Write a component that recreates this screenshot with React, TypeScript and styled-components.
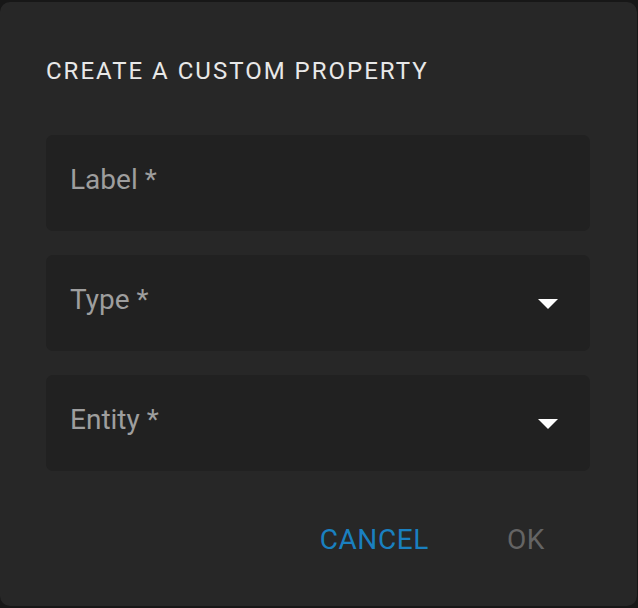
import * as React from 'react';
import styled, { createGlobalStyle } from 'styled-components';

const GlobalStyle = createGlobalStyle`
  html, body {
    margin: 0;
    padding: 0;
    background: #171717;
    font-family: Roboto, "Liberation Sans", Arial, sans-serif;
  }
`;

const Backdrop = styled.div`
  width: 638px;
  height: 608px;
  padding-top: 2px;
  box-sizing: border-box;
  overflow: hidden;
`;

const Dialog = styled.div`
  width: 637px;
  height: 604px;
  box-sizing: border-box;
  background: #272727;
  border-radius: 10px;
  padding: 53px 47px 0 46px;
  display: flex;
  flex-direction: column;
`;

const Title = styled.h2`
  margin: 0 0 48px;
  font-size: 24px;
  line-height: 32px;
  font-weight: 400;
  letter-spacing: 2px;
  color: #e8e8e8;
  text-transform: uppercase;
`;

const Fields = styled.div`
  display: flex;
  flex-direction: column;
  gap: 24px;
`;

const Field = styled.div<{ $select?: boolean }>`
  height: 96px;
  box-sizing: border-box;
  background: #212121;
  border-radius: 7px;
  padding: ${(p) => (p.$select ? '0 32px 0 24px' : '28px 32px 0 24px')};
  display: flex;
  align-items: ${(p) => (p.$select ? 'center' : 'flex-start')};
  justify-content: space-between;
`;

const FieldLabel = styled.span<{ $offset?: number }>`
  font-size: 28px;
  line-height: 34px;
  color: #9e9e9e;
  margin-top: ${(p) => p.$offset ?? 0}px;
`;

const Caret = styled.span`
  width: 0;
  height: 0;
  border-left: 10px solid transparent;
  border-right: 10px solid transparent;
  border-top: 10px solid #ffffff;
  margin-top: 2px;
`;

const Actions = styled.div`
  display: flex;
  justify-content: flex-end;
  gap: 38px;
  margin-top: 44px;
  padding-right: 25px;
`;

const Button = styled.button<{ $primary?: boolean }>`
  background: none;
  border: none;
  padding: 8px 20px;
  font-family: inherit;
  font-size: 28px;
  line-height: 34px;
  font-weight: 400;
  letter-spacing: 0.6px;
  text-transform: uppercase;
  color: ${(p) => (p.$primary ? '#1a80c0' : '#646464')};
  cursor: pointer;
`;

export default function App() {
  return (
    <>
      <GlobalStyle />
      <Backdrop>
        <Dialog>
          <Title>Create a custom property</Title>
          <Fields>
            <Field>
              <FieldLabel>Label *</FieldLabel>
            </Field>
            <Field $select>
              <FieldLabel $offset={-6}>Type *</FieldLabel>
              <Caret />
            </Field>
            <Field $select>
              <FieldLabel $offset={-6}>Entity *</FieldLabel>
              <Caret />
            </Field>
          </Fields>
          <Actions>
            <Button $primary>Cancel</Button>
            <Button disabled>OK</Button>
          </Actions>
        </Dialog>
      </Backdrop>
    </>
  );
}
